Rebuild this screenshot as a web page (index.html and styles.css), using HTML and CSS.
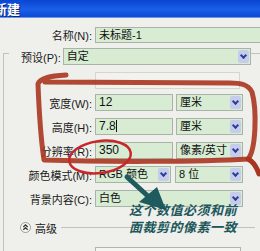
FILE: index.html
```html
<!DOCTYPE html>
<html>
  <head>
    <title>新建</title>
    <link rel="stylesheet" href="styles.css">
  </head>
  <body>
    <div class="dialog">
      <div class="titlebar"><span class="title">新建</span></div>
      <div class="panel">
        <div class="row name-row">
          <span class="lbl">名称(N):</span>
          <div class="field name-field">未标题-1</div>
        </div>
        <div class="group">
          <div class="preset-row">
            <span class="lbl">预设(P):</span>
            <div class="field select preset-field">自定<span class="arrow"></span></div>
          </div>
          <div class="row">
            <span class="lbl"></span>
            <div class="field faint"></div>
          </div>
          <div class="row first-size">
            <span class="lbl">宽度(W):</span>
            <div class="field num">12</div>
            <div class="field select unit">厘米<span class="arrow"></span></div>
          </div>
          <div class="row">
            <span class="lbl">高度(H):</span>
            <div class="field num">7.8<span class="caret"></span></div>
            <div class="field select unit">厘米<span class="arrow"></span></div>
          </div>
          <div class="row">
            <span class="lbl">分辨率(R):</span>
            <div class="field num">350</div>
            <div class="field select unit">像素/英寸<span class="arrow"></span></div>
          </div>
          <div class="row">
            <span class="lbl">颜色模式(M):</span>
            <div class="field select mode">RGB 颜色<span class="arrow"></span></div>
            <div class="field select bits">8 位<span class="arrow"></span></div>
          </div>
          <div class="row">
            <span class="lbl">背景内容(C):</span>
            <div class="field select bg">白色<span class="arrow"></span></div>
          </div>
          <div class="advanced">
            <svg class="adv-icon" width="11" height="11" viewBox="0 0 11 11">
              <circle cx="5.5" cy="5.5" r="5" fill="#f6f6f2" stroke="#9a9a96"/>
              <polyline points="3.3,5 5.5,2.9 7.7,5" fill="none" stroke="#333" stroke-width="1.2"/>
              <polyline points="3.3,7.8 5.5,5.7 7.7,7.8" fill="none" stroke="#333" stroke-width="1.2"/>
            </svg>
            <span class="adv-text">高级</span>
            <span class="adv-line"></span>
          </div>
          <div class="row last-row">
            <span class="lbl"></span>
            <div class="field profile"></div>
          </div>
        </div>
      </div>

      <!-- hand drawn marks on top of the screenshot -->
      <svg class="marks" width="260" height="251" viewBox="0 0 260 251">
        <path d="M66 75 C50 76 40 78 38 84 C39 110 41 140 44 160 C100 162 200 162 248 159 C256 150 257 110 252 92 C248 84 240 83 230 83 L45 82"
              fill="none" stroke="#a8351f" stroke-width="5" stroke-linecap="round" stroke-linejoin="round" opacity="0.9"/>
        <path d="M248 159 C254 162 257 168 259 174" fill="none" stroke="#a8351f" stroke-width="5" stroke-linecap="round"/>
        <ellipse cx="100" cy="157" rx="31" ry="16" transform="rotate(-8 100 157)"
                 fill="none" stroke="#c8262a" stroke-width="2.5"/>
        <line x1="127" y1="177" x2="150" y2="198" stroke="#1e5a5e" stroke-width="5" stroke-linecap="round"/>
        <polygon points="139,202 157,187 166,210" fill="#1e5a5e"/>
      </svg>
      <div class="note">这个数值必须和前<br>面裁剪的像素一致</div>
    </div>
  </body>
</html>
```

FILE: styles.css
```css
body {
  margin: 0;
  background-color: #efefeb;
  font-family: "Liberation Sans", "Noto Sans CJK SC", sans-serif;
  font-size: 11px;
  color: #1a1a1a;
}
.dialog {
  position: relative;
  width: 260px;
  height: 251px;
  overflow: hidden;
  background-color: #efefeb;
}
.titlebar {
  height: 17px;
  background: linear-gradient(#0845d2, #1a5ee8 55%, #0b4ad4);
  border-bottom: 1px solid #6f95e8;
}
.title {
  display: inline-block;
  margin-left: -6px;
  margin-top: 2px;
  font-family: "Noto Sans CJK SC", sans-serif;
  font-weight: bold;
  font-size: 13px;
  line-height: 14px;
  color: #fff;
  text-shadow: 1px 1px 0 #0a2470;
}
.panel {
  padding-top: 9px;
}
.row {
  display: flex;
  align-items: center;
  height: 17px;
  margin-top: 7px;
}
.lbl {
  width: 88px;
  flex: none;
  text-align: right;
  white-space: nowrap;
  margin-right: 3px;
}
.name-row {
  margin-top: 0;
  height: 16px;
  padding-left: 4px;
}
.field {
  position: relative;
  box-sizing: border-box;
  height: 100%;
  border: 1px solid #a9b3a8;
  background-color: #d7ecd2;
  padding-left: 3px;
  line-height: 15px;
  color: #111;
  white-space: nowrap;
}
.name-field {
  flex: 1;
  margin-right: -10px;
}
.group {
  margin-top: 10px;
  margin-left: 3px;
  border-top: 1px solid #c2c2ba;
  border-left: 1px solid #c2c2ba;
  height: 260px;
}
.preset-row {
  display: flex;
  align-items: center;
  height: 17px;
  margin-top: -6px;
  margin-left: 5px;
  width: 242px;
  padding-left: 12px;
  background-color: #efefeb;
  box-sizing: border-box;
}
.preset-row .lbl {
  width: auto;
  margin-right: 2px;
}
.preset-field {
  width: 190px;
}
.faint {
  width: 145px;
  border-color: #d6d6ce;
  background-color: #f2f2ee;
}
.first-size {
  margin-top: 5px;
}
.num {
  width: 78px;
  font-size: 12px;
}
.caret {
  display: inline-block;
  width: 1px;
  height: 12px;
  background-color: #111;
  vertical-align: -2px;
}
.unit {
  width: 67px;
  margin-left: 3px;
}
.mode {
  width: 76px;
}
.bits {
  width: 68px;
  margin-left: 4px;
}
.bg {
  width: 148px;
}
.select .arrow {
  position: absolute;
  right: 1px;
  top: 1px;
  width: 11px;
  height: 13px;
  background-color: #c6cdec;
  border-radius: 2px;
}
.select .arrow::after {
  content: "";
  position: absolute;
  left: 3px;
  top: 3px;
  width: 3px;
  height: 3px;
  border-right: 2px solid #2c3f95;
  border-bottom: 2px solid #2c3f95;
  transform: rotate(45deg);
}
.advanced {
  display: flex;
  align-items: center;
  height: 13px;
  margin-top: 14px;
  padding-left: 16px;
}
.adv-text {
  margin-left: 4px;
}
.adv-line {
  flex: 1;
  margin-left: 4px;
  margin-right: 5px;
  border-top: 1px solid #c2c2ba;
}
.last-row {
  margin-top: 13px;
}
.profile {
  width: 146px;
  border-color: #b4b4ac;
  background-color: #f4f4f0;
}
.marks {
  position: absolute;
  left: 0;
  top: 0;
  pointer-events: none;
}
.note {
  position: absolute;
  left: 129px;
  top: 201px;
  font-family: "Noto Sans CJK SC", sans-serif;
  font-size: 13px;
  line-height: 17px;
  font-weight: bold;
  font-style: italic;
  letter-spacing: 0.5px;
  color: #1c585c;
}
```
